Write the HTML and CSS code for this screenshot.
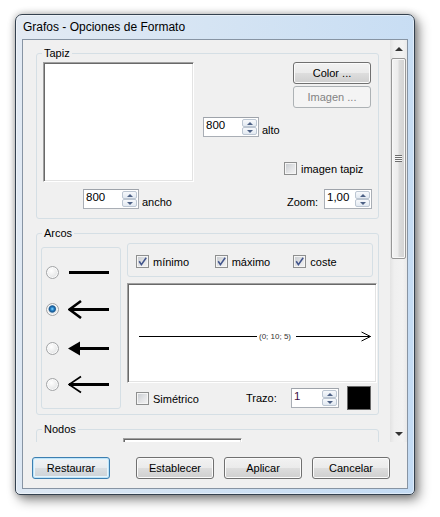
FILE: index.html
```html
<!DOCTYPE html>
<html lang="es">
<head>
<meta charset="utf-8">
<title>Grafos - Opciones de Formato</title>
<link rel="stylesheet" href="styles.css">
</head>
<body>
<div class="window">
  <div class="titlebar">Grafos - Opciones de Formato</div>
  <div class="client">
    <div class="scrollarea">
      <div class="viewport">
        <fieldset class="group">
          <legend>Tapiz</legend>
          <div class="tapiz-body">
            <div class="col-a">
              <div class="canvas sunken"></div>
              <div class="lbl-row ancho-row">
                <div class="spin w56"><span class="spin-val">800</span><span class="spin-btns"><span class="sbtn"><span class="tri up"></span></span><span class="sbtn"><span class="tri down"></span></span></span></div>
                <span class="lbl">ancho</span>
              </div>
            </div>
            <div class="col-b">
              <div class="lbl-row">
                <div class="spin w56"><span class="spin-val">800</span><span class="spin-btns"><span class="sbtn"><span class="tri up"></span></span><span class="sbtn"><span class="tri down"></span></span></span></div>
                <span class="lbl">alto</span>
              </div>
            </div>
            <div class="col-c">
              <button class="btn side-btn">Color ...</button>
              <button class="btn side-btn disabled second">Imagen ...</button>
              <div class="check tapiz-check"><span class="cb"></span><span class="t">imagen tapiz</span></div>
              <div class="zoom-row">
                <span class="lbl">Zoom:</span>
                <div class="spin w48"><span class="spin-val">1,00</span><span class="spin-btns"><span class="sbtn"><span class="tri up"></span></span><span class="sbtn"><span class="tri down"></span></span></span></div>
              </div>
            </div>
          </div>
        </fieldset>

        <fieldset class="group">
          <legend>Arcos</legend>
          <div class="arcos-body">
            <div class="radiobox">
              <div class="radio-row"><span class="radio"></span>
                <svg class="arc-icon" width="41" height="20" viewBox="0 0 41 20"><rect x="1" y="9" width="40" height="3" fill="#000"/></svg>
              </div>
              <div class="radio-row r2"><span class="radio on"></span>
                <svg class="arc-icon" width="41" height="20" viewBox="0 0 41 20"><rect x="1" y="9" width="40" height="3" fill="#000"/><polyline points="13,2 1.5,10.5 13,19" fill="none" stroke="#000" stroke-width="2.6"/></svg>
              </div>
              <div class="radio-row r3"><span class="radio"></span>
                <svg class="arc-icon" width="41" height="20" viewBox="0 0 41 20"><rect x="11" y="9" width="30" height="3" fill="#000"/><polygon points="0,10.5 12,3.5 12,17.5" fill="#000"/></svg>
              </div>
              <div class="radio-row r4"><span class="radio"></span>
                <svg class="arc-icon" width="41" height="20" viewBox="0 0 41 20"><rect x="1" y="9" width="40" height="3" fill="#000"/><polyline points="13,2.5 1,10.5 13,18.5" fill="none" stroke="#000" stroke-width="1.7"/></svg>
              </div>
            </div>
            <div class="arcos-right">
              <div class="checkgroup">
                <div class="check"><span class="cb"><svg width="11" height="11" viewBox="0 0 11 11"><path d="M2.2 5.2 L4.4 8.6 L9.2 1.8" fill="none" stroke="#42558c" stroke-width="1.6"/></svg></span><span class="t">mínimo</span></div>
                <div class="check"><span class="cb"><svg width="11" height="11" viewBox="0 0 11 11"><path d="M2.2 5.2 L4.4 8.6 L9.2 1.8" fill="none" stroke="#42558c" stroke-width="1.6"/></svg></span><span class="t">máximo</span></div>
                <div class="check"><span class="cb"><svg width="11" height="11" viewBox="0 0 11 11"><path d="M2.2 5.2 L4.4 8.6 L9.2 1.8" fill="none" stroke="#42558c" stroke-width="1.6"/></svg></span><span class="t">coste</span></div>
              </div>
              <div class="preview sunken">
                <div class="edge">
                  <span class="l1"></span>
                  <span class="edge-lab">(0; 10; 5)</span>
                  <span class="l2"></span>
                  <svg class="head" width="10" height="11" viewBox="0 0 10 11"><line x1="0" y1="5.5" x2="9.5" y2="5.5" stroke="#000" stroke-width="1"/><polyline points="0.5,1 9.5,5.5 0.5,10" fill="none" stroke="#000" stroke-width="1"/></svg>
                </div>
              </div>
              <div class="arc-bottom">
                <div class="check"><span class="cb"></span><span class="t">Simétrico</span></div>
                <div class="trazo-grp">
                  <span class="lbl trazo-lbl">Trazo:</span>
                  <div class="spin w48"><span class="spin-val purple">1</span><span class="spin-btns"><span class="sbtn"><span class="tri up"></span></span><span class="sbtn"><span class="tri down"></span></span></span></div>
                  <span class="swatch"></span>
                </div>
              </div>
            </div>
          </div>
        </fieldset>

        <fieldset class="group">
          <legend>Nodos</legend>
          <div class="nodos-body">
            <div class="nodo-ctl sunken"></div>
          </div>
        </fieldset>
      </div>
      <div class="vscroll">
        <div class="sb-arrow"><span class="sb-tri up"></span></div>
        <div class="sb-track"><div class="sb-thumb"><span class="grip"></span></div></div>
        <div class="sb-arrow"><span class="sb-tri down"></span></div>
      </div>
    </div>
    <div class="buttons">
      <button class="btn default">Restaurar</button>
      <button class="btn">Establecer</button>
      <button class="btn">Aplicar</button>
      <button class="btn">Cancelar</button>
    </div>
  </div>
</div>
</body>
</html>
```

FILE: styles.css
```css
* { box-sizing: border-box; }
html, body { margin: 0; padding: 0; }
body {
  width: 440px;
  height: 517px;
  overflow: hidden;
  background: #ffffff;
  font-family: "Liberation Sans", Arial, sans-serif;
  font-size: 11px;
  color: #000;
}

/* window frame */
.window {
  margin: 14px 0 0 15px;
  width: 400px;
  height: 481px;
  border: 1px solid #34414f;
  border-radius: 7px 7px 5px 5px;
  background: linear-gradient(100deg, #e3eaf3 0%, #d5e4f3 40%, #c3dbf4 100%);
  padding: 0 6px 5px;
  box-shadow: inset 0 0 0 1px rgba(255,255,255,0.45), 0 0 7px rgba(0,0,0,0.28), 4px 5px 12px rgba(0,0,0,0.45);
  display: flex;
  flex-direction: column;
}
.titlebar {
  height: 24px;
  line-height: 24px;
  padding-left: 1px;
  font-size: 12px;
  white-space: nowrap;
  color: #000;
}
.client {
  height: 450px;
  border: 1px solid #8794a3;
  background: #f0f0f0;
  display: flex;
  flex-direction: column;
}
.scrollarea {
  height: 402px;
  display: flex;
}
.viewport {
  width: 367px;
  overflow: hidden;
  padding: 7px 0 0 13px;
}

/* group boxes */
.group {
  margin: 0;
  padding: 0;
  width: 343px;
  min-width: 0;
  border: 1px solid #d5dfe5;
  border-radius: 3px;
}
.group + .group { margin-top: 8px; }
.group legend {
  margin-left: 5px;
  padding: 0 2px;
  font-size: 11px;
  line-height: 13px;
}

.sunken {
  background: #fff;
  border-top: 1px solid #a0a0a0;
  border-left: 1px solid #a0a0a0;
  border-right: 1px solid #ffffff;
  border-bottom: 1px solid #ffffff;
  box-shadow: inset 1px 1px 0 #696969, inset -1px -1px 0 #e3e3e3;
}

/* Tapiz */
.tapiz-body {
  height: 158px;
  display: flex;
  padding: 2px 6px 0 6px;
}
.col-a {
  width: 151px;
  display: flex;
  flex-direction: column;
}
.canvas { height: 120px; }
.lbl-row {
  display: flex;
  align-items: flex-end;
  gap: 3px;
}
.ancho-row { margin: 7px 0 0 40px; }
.col-b {
  margin-left: 9px;
  padding-top: 55px;
  align-self: flex-start;
}
.lbl { line-height: 13px; white-space: nowrap; }
.col-c {
  margin-left: auto;
  width: 88px;
  display: flex;
  flex-direction: column;
  align-items: flex-start;
}
.side-btn { margin-left: 9px; width: 78px; height: 22px; }
.side-btn.second { margin-top: 2px; }
.tapiz-check { margin-top: 53px; }
.zoom-row {
  margin-top: 13px;
  width: 88px;
  display: flex;
  justify-content: space-between;
  align-items: flex-end;
  padding-left: 3px;
}

/* spin boxes */
.spin {
  height: 20px;
  display: flex;
  background: #fff;
  border: 1px solid #a9aeb5;
  border-top-color: #9ea3aa;
  flex: none;
}
.w56 { width: 56px; }
.w48 { width: 48px; }
.spin-val {
  flex: 1;
  padding-left: 2px;
  line-height: 15px;
  font-size: 11.5px;
  color: #000;
}
.spin-val.purple { color: #3d0f45; }
.spin-btns {
  width: 15px;
  margin: 1px;
  display: flex;
  flex-direction: column;
  gap: 0;
}
.sbtn {
  flex: 1;
  border: 1px solid #bcc6d2;
  border-radius: 2px;
  background: linear-gradient(#f7f9fc, #e2e9f1);
  display: flex;
  align-items: center;
  justify-content: center;
}
.tri { width: 0; height: 0; border-left: 3px solid transparent; border-right: 3px solid transparent; }
.tri.up { border-bottom: 3px solid #4d6185; }
.tri.down { border-top: 3px solid #4d6185; }

/* checkboxes */
.check {
  display: flex;
  align-items: center;
  white-space: nowrap;
}
.check .t {
  line-height: 13px;
  padding-top: 2px;
  margin-left: 4px;
}
.cb {
  width: 13px;
  height: 13px;
  flex: none;
  border: 1px solid #8e8f8f;
  background: linear-gradient(135deg, #c5c9ce 0%, #e3e4e6 55%, #f4f4f4 100%);
  box-shadow: inset 0 0 0 1px #f5f5f5;
  display: flex;
}
.cb svg { display: block; }

/* buttons */
.btn {
  font-family: inherit;
  font-size: 11px;
  line-height: 13px;
  color: #000;
  padding: 0;
  border: 1px solid #707070;
  border-radius: 3px;
  background: linear-gradient(#f2f2f2 0%, #ebebeb 48%, #dddddd 52%, #cfcfcf 100%);
  box-shadow: inset 0 0 0 1px #fbfbfb;
  white-space: nowrap;
}
.btn.default {
  border-color: #3c7fb1;
  box-shadow: inset 0 0 0 1px #bfe3f7, inset 0 0 0 2px #e5f4fc;
  background: linear-gradient(#f1f3f5 0%, #e8ecef 48%, #d9dee2 52%, #cdd2d6 100%);
}
.btn.disabled {
  border-color: #adb2b5;
  background: #f4f4f4;
  color: #838383;
  box-shadow: none;
}
.buttons {
  display: flex;
  margin-top: 15px;
  padding-left: 9px;
  gap: 10px;
}
.buttons .btn { width: 78px; height: 22px; }
.buttons .btn.default { margin-right: 16px; }

/* Arcos */
.arcos-body {
  height: 174px;
  display: flex;
  padding-left: 4px;
}
.radiobox {
  width: 80px;
  height: 162px;
  margin-top: 7px;
  border: 1px solid #d5dfe5;
  border-radius: 3px;
  padding-top: 14px;
}
.radio-row {
  height: 20px;
  display: flex;
  align-items: center;
  padding-left: 4px;
}
.radio-row.r2 { margin-top: 17px; }
.radio-row.r3 { margin-top: 19px; }
.radio-row.r4 { margin-top: 16px; }
.arc-icon { margin-left: 9px; display: block; }
.radio {
  width: 13px;
  height: 13px;
  flex: none;
  border-radius: 50%;
  border: 1px solid #a2a4a6;
  background: radial-gradient(circle at 40% 35%, #ffffff 0%, #f4f4f4 30%, #d9dbdd 100%);
  box-shadow: inset 0 0 0 1px rgba(255,255,255,0.8);
}
.radio.on {
  background: radial-gradient(circle at 48% 45%, #8fdcff 0px, #2d8bd0 1.5px, #1a5c98 2.8px, #2f6c9e 3.3px, #e6e8ea 4.2px, #d6d8da 100%);
}
.arcos-right {
  margin-left: 6px;
  width: 250px;
  display: flex;
  flex-direction: column;
  padding-top: 3px;
}
.checkgroup {
  width: 246px;
  height: 34px;
  border: 1px solid #d5dfe5;
  border-radius: 3px;
  display: flex;
  align-items: center;
  padding: 2px 0 0 8px;
}
.checkgroup .check { width: 83px; }
.preview {
  margin-top: 6px;
  width: 250px;
  height: 100px;
}
.edge {
  margin-top: 47px;
  height: 11px;
  display: flex;
  align-items: center;
}
.l1 { margin-left: 11px; width: 118px; height: 1px; background: #000; flex: none; }
.edge-lab {
  margin: 0 5px 0 2px;
  font-size: 8px;
  line-height: 11px;
  color: #333;
  white-space: nowrap;
}
.l2 { flex: 1; height: 1px; background: #000; }
.head { display: block; margin-right: 5px; flex: none; }
.arc-bottom {
  margin-top: 3px;
  height: 24px;
  display: flex;
  align-items: center;
  padding-left: 9px;
}
.trazo-grp {
  margin-left: auto;
  margin-right: 6px;
  display: flex;
  align-items: center;
}
.trazo-lbl { width: 45px; }
.swatch {
  width: 24px;
  height: 24px;
  margin-left: 8px;
  background: #000;
  border: 1px solid #6a6a6a;
}

/* Nodos */
.nodos-body { height: 30px; }
.nodo-ctl {
  margin: 2px 0 0 86px;
  width: 119px;
  height: 20px;
}

/* scrollbar */
.vscroll {
  width: 17px;
  display: flex;
  flex-direction: column;
  background: linear-gradient(to right, #e3e3e3 0%, #efefef 25%, #f2f2f2 75%, #e9e9e9 100%);
}
.sb-arrow {
  height: 17px;
  display: flex;
  align-items: center;
  justify-content: center;
}
.sb-tri { width: 0; height: 0; border-left: 4px solid transparent; border-right: 4px solid transparent; }
.sb-tri.up { border-bottom: 4px solid #333; }
.sb-tri.down { border-top: 4px solid #333; }
.sb-track { flex: 1; padding: 1px 1px 0 1px; }
.sb-thumb {
  height: 201px;
  border: 1px solid #979797;
  border-radius: 2px;
  background: linear-gradient(to right, #f4f4f4 0%, #ececec 48%, #dcdcdc 52%, #d2d2d2 100%);
  box-shadow: inset 0 0 0 1px #f8f8f8;
  display: flex;
  align-items: center;
  justify-content: center;
}
.grip {
  width: 7px;
  height: 7px;
  background: repeating-linear-gradient(to bottom, #6e6e6e 0 1px, #f8f8f8 1px 2px);
}
```
